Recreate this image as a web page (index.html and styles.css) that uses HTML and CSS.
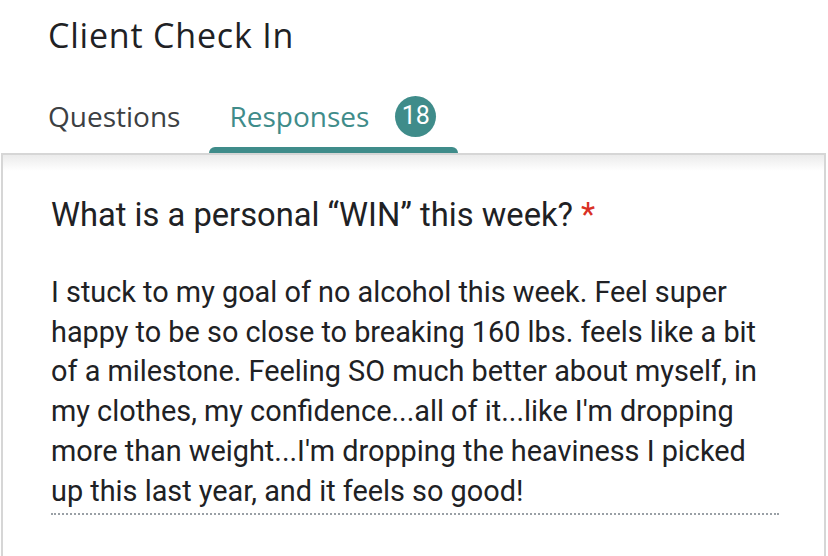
FILE: index.html
```html
<!DOCTYPE html>
<html lang="en">
<head>
    <meta charset="UTF-8">
    <meta name="viewport" content="width=device-width, initial-scale=1.0">
    <title>Client Check In</title>
    <link rel="stylesheet" href="styles.css">
</head>
<body>

    <header class="header">
        <h1 class="form-title">Client Check In</h1>
        <nav class="tabs">
            <div class="tab">Questions</div>
            <div class="tab tab-active">
                Responses
                <span class="badge">18</span>
            </div>
        </nav>
    </header>

    <div class="card">
        <h2 class="question">What is a personal “WIN” this week? <span class="required">*</span></h2>
        <div class="answer">
            <p>I stuck to my goal of no alcohol this week. Feel super<br>
            happy to be so close to breaking 160 lbs. feels like a bit<br>
            of a milestone. Feeling SO much better about myself, in<br>
            my clothes, my confidence...all of it...like I'm dropping<br>
            more than weight...I'm dropping the heaviness I picked<br>
            up this last year, and it feels so good!</p>
        </div>
    </div>

</body>
</html>
```

FILE: styles.css
```css
body {
    margin: 0;
    background: #fff;
    font-family: Roboto, "Noto Sans", sans-serif;
    color: #202124;
    width: 828px;
    height: 556px;
    overflow: hidden;
}
.header {
    padding: 0 0 0 48px;
}
.form-title {
    margin: 0;
    height: 70px;
    font-family: "Open Sans", sans-serif;
    font-weight: 400;
    font-size: 34px;
    line-height: 70px;
    letter-spacing: 0.8px;
    color: #202124;
}
.tabs {
    display: flex;
    margin-top: 22px;
}
.tab {
    font-family: "Open Sans", sans-serif;
    font-size: 28px;
    color: #3c4043;
    height: 48px;
    line-height: 48px;
    position: relative;
}
.tab-active {
    color: #3f8c8a;
    margin-left: 49px;
    display: flex;
    align-items: center;
}
.tab-active::after {
    content: "";
    position: absolute;
    left: -20px;
    right: -22px;
    bottom: -13px;
    height: 6px;
    background: #3f8c8a;
    border-radius: 6px 6px 0 0;
}
.badge {
    display: inline-flex;
    align-items: center;
    justify-content: center;
    width: 41px;
    height: 41px;
    margin-left: 26px;
    border-radius: 50%;
    background: #3f8c8a;
    color: #fff;
    font-family: Roboto, sans-serif;
    font-size: 25px;
}
.card {
    margin: 13px 2px 0 1px;
    border: 2px solid #d6d6d6;
    border-bottom: none;
    background: linear-gradient(#ebebeb, #fff 16px);
    padding: 40px 48px 0 48px;
    height: 361px;
}
.question {
    margin: 0;
    font-weight: 400;
    font-size: 32.7px;
    line-height: 40px;
    color: #202124;
}
.required {
    color: #d93025;
}
.answer {
    margin-top: 38px;
    width: 728px;
    border-bottom: 2px dotted #9aa0a6;
    padding-bottom: 2px;
}
.answer p {
    margin: 0;
    font-size: 28.85px;
    line-height: 39.7px;
    color: #202124;
    white-space: nowrap;
}
```
